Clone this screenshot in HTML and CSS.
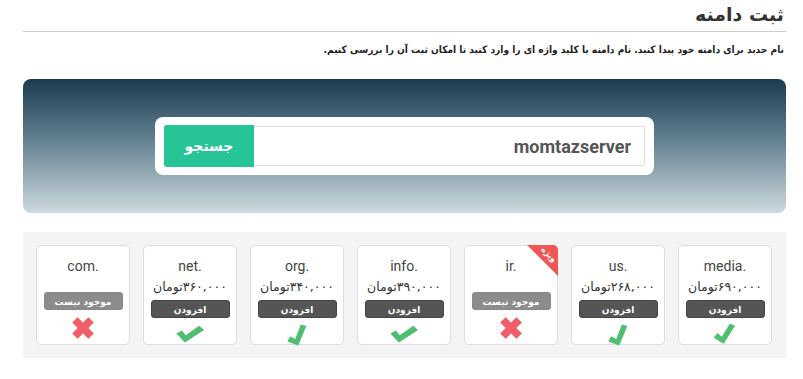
FILE: index.html
```html
<!DOCTYPE html>
<html lang="fa" dir="rtl">
  <head>
    <meta charset="UTF-8" />
    <meta name="viewport" content="width=device-width, initial-scale=1.0" />
    <title>ثبت دامنه</title>
    <link rel="stylesheet" href="styles.css">
  </head>
  <body>
    <div class="page">
      <h1 class="title">ثبت دامنه</h1>
      <p class="lead">نام جدید برای دامنه خود پیدا کنید. نام دامنه یا کلید واژه ای را وارد کنید تا امکان ثبت آن را بررسی کنیم.</p>

      <div class="hero">
        <form class="search">
          <input class="search-input" type="text" value="momtazserver" dir="ltr" />
          <button class="search-btn" type="button">جستجو</button>
        </form>
      </div>

      <div class="domains">
        <div class="card">
          <div class="tld" dir="ltr">media.</div>
          <div class="price">۶۹۰,۰۰۰تومان</div>
          <div class="btn">افزودن</div>
          <svg class="mark ok tilt-a" viewBox="0 0 28 22"><path d="M1 12 L10 21 L27 5 L22 1 L10 13 L6 8 Z"/></svg>
        </div>
        <div class="card">
          <div class="tld" dir="ltr">us.</div>
          <div class="price">۲۶۸,۰۰۰تومان</div>
          <div class="btn">افزودن</div>
          <svg class="mark ok tilt-b" viewBox="0 0 28 22"><path d="M1 12 L10 21 L27 5 L22 1 L10 13 L6 8 Z"/></svg>
        </div>
        <div class="card">
          <span class="ribbon"><span>ویژه</span></span>
          <div class="tld" dir="ltr">ir.</div>
          <div class="btn off">موجود نیست</div>
          <svg class="mark no" viewBox="0 0 24 24"><path d="M2 7 L7 2 L12 7 L17 2 L22 7 L17 12 L22 17 L17 22 L12 17 L7 22 L2 17 L7 12 Z"/></svg>
        </div>
        <div class="card">
          <div class="tld" dir="ltr">info.</div>
          <div class="price">۳۹۰,۰۰۰تومان</div>
          <div class="btn">افزودن</div>
          <svg class="mark ok tilt-c" viewBox="0 0 28 22"><path d="M1 12 L10 21 L27 5 L22 1 L10 13 L6 8 Z"/></svg>
        </div>
        <div class="card">
          <div class="tld" dir="ltr">org.</div>
          <div class="price">۳۴۰,۰۰۰تومان</div>
          <div class="btn">افزودن</div>
          <svg class="mark ok tilt-b" viewBox="0 0 28 22"><path d="M1 12 L10 21 L27 5 L22 1 L10 13 L6 8 Z"/></svg>
        </div>
        <div class="card">
          <div class="tld" dir="ltr">net.</div>
          <div class="price">۳۶۰,۰۰۰تومان</div>
          <div class="btn">افزودن</div>
          <svg class="mark ok tilt-c" viewBox="0 0 28 22"><path d="M1 12 L10 21 L27 5 L22 1 L10 13 L6 8 Z"/></svg>
        </div>
        <div class="card">
          <div class="tld" dir="ltr">com.</div>
          <div class="btn off">موجود نیست</div>
          <svg class="mark no" viewBox="0 0 24 24"><path d="M2 7 L7 2 L12 7 L17 2 L22 7 L17 12 L22 17 L17 22 L12 17 L7 22 L2 17 L7 12 Z"/></svg>
        </div>
      </div>
    </div>
  </body>
</html>
```

FILE: styles.css
```css
body {
  margin: 0;
  background: #ffffff;
  font-family: "DejaVu Sans", "Noto Sans", sans-serif;
  color: #222222;
}

.page {
  margin: 0 17px 0 23px;
}

.title {
  margin: 0;
  padding: 3px 2px 0 0;
  height: 28px;
  font-size: 19px;
  font-weight: bold;
  color: #333333;
  border-bottom: 1px solid #cccccc;
}

.lead {
  margin: 0;
  padding: 12px 2px 0 0;
  height: 35px;
  font-family: "DejaVu Sans Condensed", "DejaVu Sans", sans-serif;
  font-size: 10.1px;
  font-weight: bold;
  color: #222222;
}

.hero {
  height: 134px;
  border-radius: 8px;
  background: linear-gradient(to bottom, #1a3a4f 0%, #62808f 45%, #cdd9df 100%);
  display: flex;
  align-items: center;
  justify-content: center;
}

.search {
  margin: 0;
  width: 481px;
  height: 40px;
  padding: 9px;
  background: #ffffff;
  border-radius: 8px;
  display: flex;
}

.search-input {
  flex: 1;
  margin: 0;
  border: 1px solid #dddddd;
  border-left: none;
  border-radius: 0 2px 2px 0;
  padding: 0 13px;
  font-family: Roboto, "Liberation Sans", sans-serif;
  font-size: 18px;
  font-weight: bold;
  color: #555555;
  text-align: right;
  outline: none;
}

.search-btn {
  width: 90px;
  height: 42px;
  margin: -1px 0 0 0;
  border: none;
  border-radius: 3px 0 0 3px;
  background: #27c497;
  color: #ffffff;
  font-family: "DejaVu Sans", sans-serif;
  font-size: 14px;
  font-weight: bold;
}

.domains {
  margin-top: 19px;
  background: #f4f4f4;
  padding: 13px 14px 13px 12px;
  display: flex;
  gap: 13px;
}

.card {
  position: relative;
  width: 92px;
  height: 87px;
  padding-top: 11px;
  background: #ffffff;
  border: 1px solid #dddddd;
  border-radius: 5px;
  display: flex;
  flex-direction: column;
  align-items: center;
}

.tld {
  height: 18px;
  line-height: 18px;
  font-family: Roboto, "Liberation Sans", sans-serif;
  font-size: 14px;
  color: #444444;
}

.price {
  margin-top: 3px;
  height: 18px;
  line-height: 18px;
  font-size: 12.5px;
  color: #333333;
}

.btn {
  margin-top: 4px;
  width: 79px;
  height: 18px;
  line-height: 18px;
  border-radius: 3px;
  background: #555555;
  border: 1px solid #444444;
  box-sizing: border-box;
  color: #ffffff;
  font-size: 9px;
  font-weight: bold;
  text-align: center;
}

.btn.off {
  margin-top: 17px;
  background: #8c8c8c;
  border-color: #888888;
}

.mark {
  margin-top: 6px;
  width: 28px;
  height: 22px;
}

.mark.ok {
  fill: #3cb862;
  opacity: 0.9;
}

.mark.no {
  margin-top: 5px;
  width: 26px;
  height: 26px;
  fill: #ec2a38;
  opacity: 0.75;
}

.tilt-a {
  transform: rotate(-14deg);
}

.tilt-b {
  transform: rotate(-24deg) translateY(2px);
}

.tilt-c {
  transform: rotate(6deg) scaleX(1.15);
}

.ribbon {
  position: absolute;
  top: -1px;
  right: -1px;
  width: 31px;
  height: 31px;
  background: #f05656;
  border-top-right-radius: 5px;
  clip-path: polygon(0 0, 100% 0, 100% 100%);
  overflow: hidden;
}

.ribbon span {
  position: absolute;
  top: 5px;
  right: 0;
  transform: rotate(45deg);
  color: #ffffff;
  font-size: 8px;
  font-weight: bold;
}
```
